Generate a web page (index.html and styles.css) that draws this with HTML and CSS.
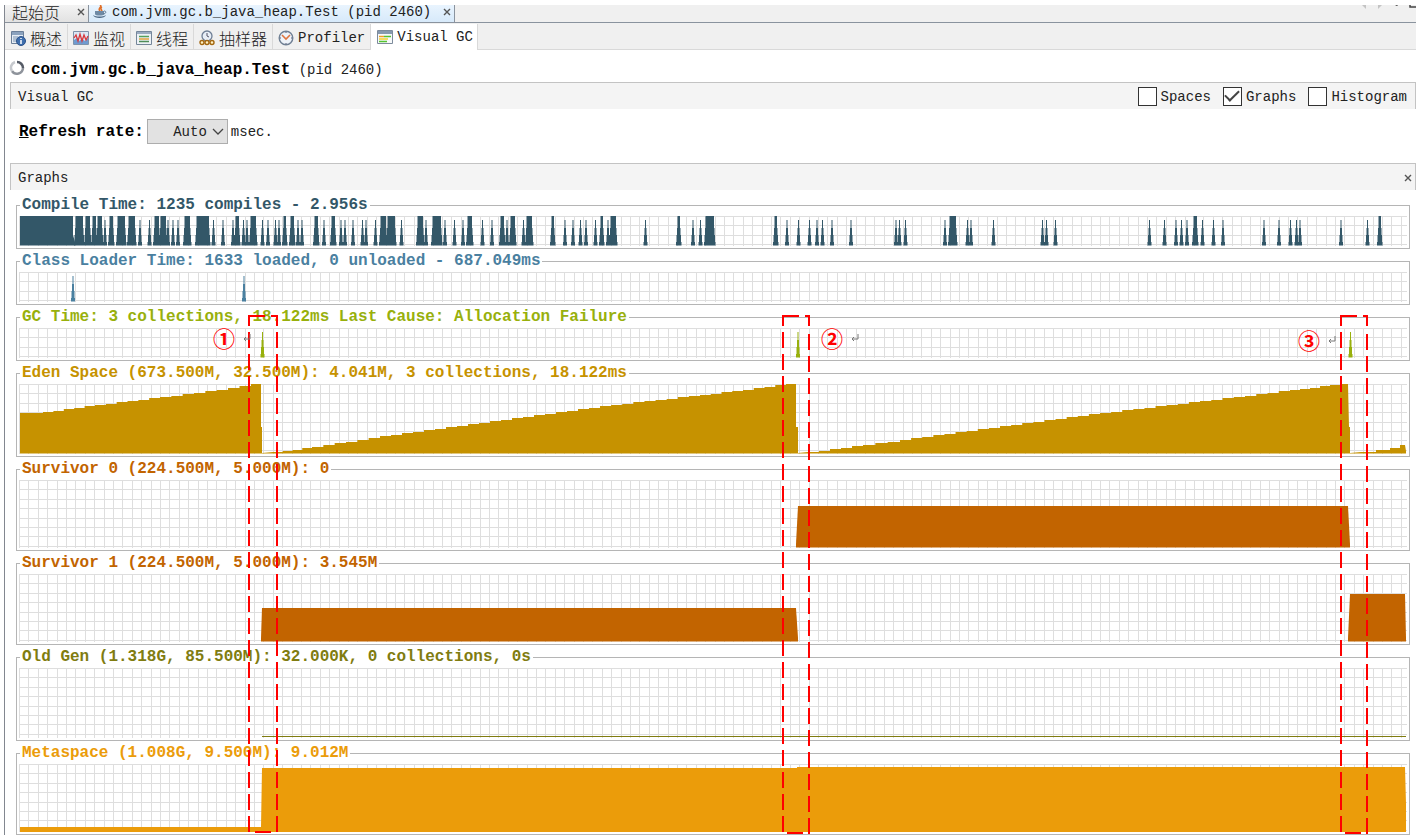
FILE: index.html
```html
<!DOCTYPE html>
<html lang="zh-CN">
<head>
<meta charset="utf-8">
<title>Visual GC</title>
<link rel="stylesheet" href="styles.css">
</head>
<body>
<div class="window">
  <header class="doc-tabs">
    <div class="doc-tab">
      <span class="cjk">起始页</span>
      <button class="close" type="button" aria-label="Close start page"><svg width="8" height="8" viewBox="0 0 8 8"><path d="M1 1l6 6M7 1L1 7"/></svg></button>
    </div>
    <div class="doc-tab active">
      <svg class="java" width="14" height="14" viewBox="0 0 14 14"><path d="M7 0c3 2-3 3 0 6M9 2c-2 1-1 2 0 4" fill="none" stroke="#e0702a" stroke-width="1.6"/><path d="M2 6h9v3c0 2-9 2-9 0z" fill="#6f8aa5"/><path d="M11 6c3 0 2 3-1 3" fill="none" stroke="#57718c"/><path d="M0 10c3 2 10 2 13 0-1 4-12 4-13 0z" fill="#4d6985"/></svg>
      <span>com.jvm.gc.b_java_heap.Test (pid 2460)</span>
      <button class="close" type="button" aria-label="Close Test"><svg width="8" height="8" viewBox="0 0 8 8"><path d="M1 1l6 6M7 1L1 7"/></svg></button>
    </div>
    <svg class="tab-nav" width="56" height="18" viewBox="0 0 56 18"><path d="M2 0h4v4zM18 0h4l-4 4z" fill="#c4c4c4"/><path d="M35 0h3l-1 1z" fill="#333"/><path d="M50 0v2h6" fill="none" stroke="#444" stroke-width="1.5"/></svg>
  </header>

  <nav class="view-tabs">
    <button type="button" class="view-tab">
      <svg width="16" height="16" viewBox="0 0 16 16"><path d="M1.500 1.500h12v12h-12z" fill="#e6edf5" stroke="#6b7f99"/><path d="M2 2h11v3H2z" fill="#8ba2be"/><path d="M3 7h5M3 9h4M3 11h4" stroke="#7b93b0"/><circle cx="11" cy="11" r="4.500" fill="#3f6fae" stroke="#2c528a"/><path d="M11 10v4M11 8v1" stroke="#fff" stroke-width="1.500"/></svg>
      <span class="cjk">概述</span>
    </button>
    <button type="button" class="view-tab">
      <svg width="16" height="16" viewBox="0 0 16 16"><path d="M.5 1.500h15v13H.5z" fill="#dce8f5" stroke="#7f93ab"/><path d="M1 14v-4l3-2 2 3 3-2 3 2 3-3v6z" fill="#6f9bd1"/><path d="M1 8l2-3 2 6 2-7 2 7 2-6 2 5 2-4" fill="none" stroke="#d8383c" stroke-width="1.300"/></svg>
      <span class="cjk">监视</span>
    </button>
    <button type="button" class="view-tab">
      <svg width="16" height="16" viewBox="0 0 16 16"><path d="M.5 1.500h15v13H.5z" fill="#edf1f5" stroke="#75869a"/><path d="M1 2h14v2H1z" fill="#9aabc0"/><path d="M3 6.500h10" stroke="#55a05a" stroke-width="1.500"/><path d="M3 9h10" stroke="#e0a23c" stroke-width="1.500"/><path d="M3 11.500h10" stroke="#4d8c58" stroke-width="1.500"/></svg>
      <span class="cjk">线程</span>
    </button>
    <button type="button" class="view-tab">
      <svg width="16" height="16" viewBox="0 0 16 16"><circle cx="8" cy="6" r="5" fill="#e8eef6" stroke="#6f7f95" stroke-width="1.300"/><path d="M8 3v3l2 1" fill="none" stroke="#556"/><g fill="#fff1c4" stroke="#a3670f" stroke-width="1.400"><circle cx="3" cy="12.500" r="2"/><circle cx="8" cy="12.500" r="2"/><circle cx="13" cy="12.500" r="2"/></g></svg>
      <span class="cjk">抽样器</span>
    </button>
    <button type="button" class="view-tab">
      <svg width="16" height="16" viewBox="0 0 16 16"><circle cx="8" cy="8" r="6.800" fill="#eef3f9" stroke="#6f7f93" stroke-width="1.400"/><path d="M8 2v1M8 13v1M2 8h1M13 8h1" stroke="#557"/><path d="M4 5l4 4 4-4" fill="none" stroke="#df7540" stroke-width="1.600"/></svg>
      <span>Profiler</span>
    </button>
    <button type="button" class="view-tab selected">
      <svg width="16" height="16" viewBox="0 0 16 16"><path d="M.5 1.500h15v13H.5z" fill="#f7f9fa" stroke="#7d8b9c"/><path d="M1 2h14v3H1z" fill="#8799ae"/><path d="M2 7.500h5" stroke="#f0a020" stroke-width="1.500"/><path d="M7 7.500h7M2 12.500h8" stroke="#55c430" stroke-width="1.500"/><path d="M2 10h9" stroke="#f3d130" stroke-width="1.500"/></svg>
      <span>Visual GC</span>
    </button>
  </nav>

  <main>
    <h1 class="title">
      <svg width="16" height="16" viewBox="0 0 16 16" fill="none" stroke-width="2.500"><path d="M8 2a6 6 0 0 1 6 6" stroke="#555b66"/><path d="M14 8a6 6 0 0 1-11 3" stroke="#8e939b"/><path d="M3 11a6 6 0 0 1 3-9" stroke="#c6c9ce"/></svg>
      <span><b>com.jvm.gc.b_java_heap.Test</b> (pid 2460)</span>
    </h1>

    <div class="bar">
      <span>Visual GC</span>
      <div class="checks">
        <label><input type="checkbox">Spaces</label>
        <label><input type="checkbox" checked>Graphs</label>
        <label><input type="checkbox">Histogram</label>
      </div>
    </div>

    <div class="refresh">
      <label for="rate"><u>R</u>efresh rate:</label>
      <span class="combo">
        <select id="rate"><option>Auto</option></select>
        <svg width="12" height="8" viewBox="0 0 12 8"><path d="M1 1l5 5 5-5" fill="none" stroke="#444" stroke-width="1.300"/></svg>
      </span>
      <span>msec.</span>
    </div>

    <div class="bar">
      <span>Graphs</span>
      <button class="close" type="button" aria-label="Close graphs"><svg width="8" height="8" viewBox="0 0 8 8"><path d="M1 1l6 6M7 1L1 7"/></svg></button>
    </div>

    <div class="graphs">
      <fieldset class="compile"><legend>Compile Time: 1235 compiles - 2.956s</legend><svg id="compile" class="plot small"></svg></fieldset>
      <fieldset class="loader"><legend>Class Loader Time: 1633 loaded, 0 unloaded - 687.049ms</legend><svg id="loader" class="plot small"></svg></fieldset>
      <fieldset class="gc"><legend>GC Time: 3 collections, 18.122ms Last Cause: Allocation Failure</legend><svg id="gc" class="plot small"></svg></fieldset>
      <fieldset class="eden"><legend>Eden Space (673.500M, 32.500M): 4.041M, 3 collections, 18.122ms</legend><svg id="eden" class="plot large"></svg></fieldset>
      <fieldset class="survivor"><legend>Survivor 0 (224.500M, 5.000M): 0</legend><svg id="s0" class="plot medium"></svg></fieldset>
      <fieldset class="survivor"><legend>Survivor 1 (224.500M, 5.000M): 3.545M</legend><svg id="s1" class="plot medium"></svg></fieldset>
      <fieldset class="old"><legend>Old Gen (1.318G, 85.500M): 32.000K, 0 collections, 0s</legend><svg id="old" class="plot large"></svg></fieldset>
      <fieldset class="meta"><legend>Metaspace (1.008G, 9.500M): 9.012M</legend><svg id="meta" class="plot medium"></svg></fieldset>

      <svg class="mark mark-1" width="30" height="520" viewBox="0 0 30 520"><path d="M1 0v518M29 0v518" stroke-dasharray="16 6" stroke-dashoffset="5"/><path d="M0 1h17M23 1h7M7 517h16"/></svg>
      <svg class="mark mark-2" width="28" height="520" viewBox="0 0 28 520"><path d="M1 0v518" stroke-dasharray="16 6" stroke-dashoffset="5"/><path d="M27 0v11M27 19v500" stroke-dasharray="16 6"/><path d="M0 1h17M23 1h5M5 518h16"/></svg>
      <svg class="mark mark-3" width="28" height="520" viewBox="0 0 28 520"><path d="M1 0v518" stroke-dasharray="16 6" stroke-dashoffset="5"/><path d="M27 0v11M27 19v500" stroke-dasharray="16 6"/><path d="M0 1h17M23 1h5M5 518h16"/></svg>
      <div class="note note-1"><span>①</span><svg width="8" height="8" viewBox="0 0 8 8"><path d="M7 0v5H1M3 3L1 5l2 2"/></svg></div>
      <div class="note note-2"><span>②</span><svg width="8" height="8" viewBox="0 0 8 8"><path d="M7 0v5H1M3 3L1 5l2 2"/></svg></div>
      <div class="note note-3"><span>③</span><svg width="8" height="8" viewBox="0 0 8 8"><path d="M7 0v5H1M3 3L1 5l2 2"/></svg></div>
    </div>
  </main>
</div>
<script src="graphs.js"></script>
</body>
</html>
```
FILE: styles.css
```css
* { box-sizing: border-box; }

body {
  margin: 0;
  background: #fff;
  color: #222;
  font: 14px/18px "Liberation Mono", "Noto Sans CJK SC", monospace;
}

button { font: inherit; color: inherit; }
svg { display: block; flex: none; }

.cjk { font: 300 16px/18px "Noto Sans CJK SC", sans-serif; }

.window {
  margin: 5px 0 0 4px;
  border-left: 1px solid #828790;
}

.doc-tabs {
  display: flex;
  height: 18px;
  overflow: hidden;
  background: #f0f0f0;
  border-bottom: 1px solid #8a939e;
}
.doc-tab {
  display: flex;
  align-items: center;
  gap: 5px;
  height: 17px;
  padding: 0 3px 3px 7px;
  border-right: 1px solid #8a939e;
  background: linear-gradient(#f3f3f3, #e2e2e2);
  white-space: nowrap;
}
.doc-tab .cjk { line-height: 14px; }
.doc-tab .close { margin-left: 12px; }
.doc-tab.active {
  height: 18px;
  padding: 0 3px 4px 4px;
  background: linear-gradient(#e9f4fe, #d6e9fa);
}
.doc-tab.active .close { margin-left: 7px; }
.tab-nav { margin-left: auto; }

.close {
  display: flex;
  padding: 0;
  border: 0;
  background: none;
}
.close path { fill: none; stroke: #555; stroke-width: 1.4; }

.view-tabs {
  display: flex;
  height: 27px;
  padding-top: 1px;
  background: #f0f0f0;
  border-bottom: 1px solid #d9d9d9;
}
.view-tab {
  display: flex;
  align-items: center;
  gap: 4px;
  padding: 2px 5px 0;
  border: 0;
  border-right: 1px solid #d9d9d9;
  background: none;
  white-space: nowrap;
}
.view-tab.selected {
  height: 26px;
  padding: 0 4px 0 6px;
  background: #fff;
}

.title {
  display: flex;
  align-items: center;
  gap: 6px;
  height: 32px;
  margin: 0;
  padding: 8px 0 0 4px;
  font-size: 14px;
  font-weight: 400;
}
.title svg { margin-bottom: 5px; }
.title b { font-size: 16px; color: #000; }

.bar {
  display: flex;
  justify-content: space-between;
  align-items: center;
  height: 27px;
  margin-left: 5px;
  padding: 2px 8px 0 7px;
  border: 1px solid #c3c3c3;
  border-bottom: 0;
  background: #f4f4f4;
}
.bar > .close { margin-right: -5px; }

.checks { display: flex; gap: 12px; }
.checks label { display: flex; align-items: center; gap: 4px; }
.checks input {
  display: grid;
  place-items: center;
  appearance: none;
  width: 19px;
  height: 19px;
  margin: 0 0 2px;
  border: 1px solid #333;
  background: #fff;
}
.checks input:checked::after {
  content: "";
  width: 12px;
  height: 6px;
  margin-bottom: 4px;
  border: solid #444;
  border-width: 0 0 2px 2px;
  transform: rotate(-45deg);
}

.refresh {
  display: flex;
  align-items: center;
  gap: 3px;
  height: 54px;
  padding: 0 0 9px 14px;
}
.refresh label { font-size: 16px; font-weight: 700; color: #000; }
.combo { position: relative; }
.combo select {
  appearance: none;
  display: block;
  width: 81px;
  height: 25px;
  padding: 0 20px 0 4px;
  border: 1px solid #adadad;
  border-radius: 0;
  background: #e2e2e2;
  color: #222;
  font: inherit;
  text-align-last: right;
}
.combo svg { position: absolute; right: 4px; top: 9px; pointer-events: none; }

.graphs {
  position: relative;
  display: flex;
  flex-direction: column;
  gap: 3px;
  padding: 6px 6px 0 11px;
}
fieldset {
  min-width: 0;
  margin: 0;
  padding: 2px;
  border: 1px solid #b5b5b5;
}
legend {
  margin-left: 1px;
  padding: 0 2px;
  font-size: 16px;
  font-weight: 700;
  line-height: 18px;
  white-space: nowrap;
}
.plot { width: 100%; fill: currentColor; }
.plot .grid { fill: none; stroke: #dedede; }
.small { height: 30px; }
.medium { height: 68px; }
.large { height: 70px; }

.compile { color: #335768; }
.loader { color: #4a80a0; }
.gc { color: #98b00c; }
.eden { color: #c69200; }
.survivor { color: #c26400; }
.old { color: #807c10; }
.meta { color: #eb9c0a; }

.mark {
  position: absolute;
  top: 125px;
  fill: none;
  stroke: #f00;
  stroke-width: 2;
}
.mark-1 { left: 243px; }
.mark-2 { left: 777px; }
.mark-3 { left: 1335px; }

.note {
  position: absolute;
  top: 138px;
  display: flex;
  align-items: center;
  gap: 8px;
  color: #f00;
  font: 700 22px/18px "Noto Sans CJK SC", sans-serif;
}
.note svg { margin-top: 2px; }
.note path { fill: none; stroke: #777; }
.note-1 { left: 208px; }
.note-2 { left: 816px; }
.note-3 { left: 1293px; top: 140px; }
```
FILE: graphs.js
```js
const NS = "http://www.w3.org/2000/svg";
const WIDTH = 1388;
const ORIGIN = 19;

function add(svg, d, className) {
  const path = document.createElementNS(NS, "path");
  path.setAttribute("d", d);
  if (className) path.setAttribute("class", className);
  svg.appendChild(path);
}

function plot(id, height) {
  const svg = document.getElementById(id);
  svg.setAttribute("viewBox", `0 0 ${WIDTH} ${height}`);
  svg.setAttribute("preserveAspectRatio", "none");
  let d = "";
  for (let x = 0; x < WIDTH; x += 9.4) d += `M${Math.round(x) + 0.5} 0V${height}`;
  for (let y = 0; y < height; y += 9.4) d += `M0 ${Math.round(y) + 0.5}H${WIDTH}`;
  add(svg, d, "grid");
  return svg;
}

// A single sample is a number; a run of busy samples is a [start, end] pair.
function spikes(svg, items) {
  let d = "";
  for (const item of items) {
    const run = Array.isArray(item);
    const a = (run ? item[0] : item) - ORIGIN;
    const b = (run ? item[1] + 0.5 : item) - ORIGIN;
    const top = run ? 0 : 4;
    d += `M${a - 2} 29.5V26H${a - 1.5}V19H${a - 1}V12H${a - 0.5}V${top}H${b + 0.5}V12H${b + 1}V19H${b + 1.5}V26H${b + 2}V29.5Z`;
  }
  add(svg, d);
}

function area(svg, points, height) {
  let d = `M${points[0][0] - ORIGIN} ${height}`;
  for (const [x, y] of points) d += `L${x - ORIGIN} ${y}`;
  add(svg, d + `V${height}Z`);
}

// Stepped ramp through the given points.
function ramp(points) {
  const out = [];
  for (let i = 1; i < points.length; i++) {
    const [x0, y0] = points[i - 1];
    const [x1, y1] = points[i];
    const n = Math.max(1, Math.round((x1 - x0) / 11));
    for (let k = 0; k < n; k++) {
      const y = Math.round(y0 + (y1 - y0) * k / n);
      out.push([x0 + (x1 - x0) * k / n, y], [x0 + (x1 - x0) * (k + 1) / n, y]);
    }
  }
  return out;
}

const compile = plot("compile", 30);
area(compile, [[20, 0], [73, 0], [73, 19], [75, 26]], 29.5);
spikes(compile, [
  [76, 82], [86, 89], [93, 95], [98, 101], 105, [110, 112], [118, 124],
  [129, 134], 140, 149.5, [155, 158], [161, 165], 168, 173, 178, [185, 189],
  [197, 208], 213.5, 223, 233, [236, 238], 243.5, 247, [251, 255], 262.5, 268,
  275.5, 279, [284, 285], [291, 293], 298, 302, [315, 317], 324, [332, 334],
  341, 345, 353, 362.5, 366, 375.5, [381, 385], [388, 394], 401.5, [418, 422],
  426, [433, 440], 445, 454.5, 463, [468, 471], 482.5, 492, [501, 503], 507,
  [511, 514], 523.5, [527, 531], [552, 553], 565, 573, 580.5, 586, 595.5,
  [601, 602], 608, [611, 615], 645.5, [678, 679], 693, 700.5, [706, 713],
  [775, 776], 787, 798.5, 809.5, 817, 822.5, 832, 851, 896, 899.5, 905.5, 945,
  [950, 955], 967.5, 971, 993.5, 1042.5, 1046.5, 1055.5, 1149.5, 1164.5, 1176,
  1181.5, 1187, [1194, 1196], 1202.5, 1213.5, 1223, 1264, 1279, 1290.5, 1296.5,
  1300, 1341, 1367.5, [1379, 1380]
]);
spikes(plot("loader", 30), [73, 244]);
spikes(plot("gc", 30), [262.5, 798, 1350.5]);

area(plot("eden", 70), [
  ...ramp([[20, 29], [43, 28], [95, 21], [160, 13], [228, 4], [251, 0], [261, 0]]),
  [261, 43], [262, 43], [262, 69],
  ...ramp([[273, 68], [312, 63], [380, 52], [490, 37], [600, 22], [700, 11], [786, 0], [796, 0]]),
  [796, 43], [798, 43], [798, 69],
  ...ramp([[808, 68], [863, 61], [900, 56], [1000, 42], [1100, 29], [1200, 17], [1290, 6], [1340, 0], [1348, 0]]),
  [1349, 43], [1350, 43], [1350, 69],
  ...ramp([[1361, 68], [1376, 66], [1390, 64], [1400, 61], [1405, 61]]),
  [1406, 67]
], 69.5);

area(plot("s0", 68), [[796, 64], [798, 26], [1348, 26], [1350, 64]], 67.5);

const s1 = plot("s1", 68);
area(s1, [[261, 64], [262, 34], [796, 34], [798, 64]], 67.5);
area(s1, [[1348, 64], [1350, 20], [1405, 20], [1406, 64]], 67.5);

area(plot("old", 70), [[262, 68], [1406, 68]], 69);
area(plot("meta", 68), [[20, 63], [261, 63], [262, 4], [797, 4], [797, 3], [1405, 3], [1406, 40]], 68);
```
